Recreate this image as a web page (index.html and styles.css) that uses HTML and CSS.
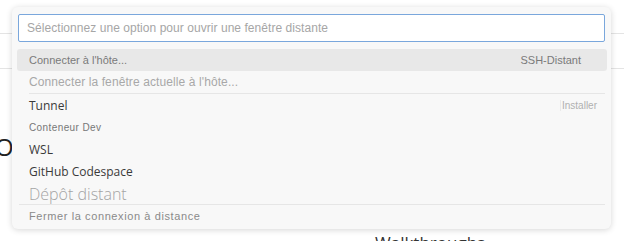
FILE: index.html
```html
<!DOCTYPE html>
<html lang="fr">
<head>
<meta charset="utf-8">
<link rel="stylesheet" href="styles.css">
</head>
<body>
<div class="page">
  <div class="bg-line first"></div>
  <div class="bg-line second"></div>
  <div class="bg-o">O</div>
  <div class="bg-walk">Walkthroughs</div>
</div>
<div class="picker">
  <div class="input">Sélectionnez une option pour ouvrir une fenêtre distante</div>
  <div class="list">
    <div class="row active"><span class="label arial">Connecter à l'hôte...</span><span class="tag">SSH-Distant</span></div>
    <div class="row"><span class="label arial wide faint">Connecter la fenêtre actuelle à l'hôte...</span></div>
    <div class="sep"></div>
    <div class="row"><span class="label segoe">Tunnel</span><span class="install">Installer</span></div>
    <div class="row"><span class="label arial small">Conteneur Dev</span></div>
    <div class="row"><span class="label segoe">WSL</span></div>
    <div class="row"><span class="label segoe">GitHub Codespace</span></div>
    <div class="row"><span class="label light">Dépôt distant</span></div>
    <div class="sep sep-full"></div>
    <div class="row last"><span class="label arial mid">Fermer la connexion à distance</span></div>
  </div>
</div>
</body>
</html>
```

FILE: styles.css
```css
html, body {
  margin: 0;
  padding: 0;
  background: #ffffff;
  width: 624px;
  height: 241px;
  overflow: hidden;
  font-family: "Liberation Sans", Arial, sans-serif;
}
.page {
  position: relative;
  display: flow-root;
  width: 624px;
  height: 241px;
}
.bg-line {
  height: 0;
  border-top: 1px solid #e4e4e4;
}
.bg-line.first { margin-top: 33px; }
.bg-line.second { margin-top: 34px; }
.bg-o {
  position: absolute;
  left: -5px;
  top: 132px;
  font-family: "Open Sans", sans-serif;
  font-size: 24px;
  line-height: 30px;
  color: #222;
}
.bg-walk {
  position: absolute;
  left: 375px;
  top: 232px;
  font-family: "Open Sans", sans-serif;
  font-size: 17px;
  line-height: 22px;
  color: #333;
}
.picker {
  position: absolute;
  left: 12px;
  top: 7px;
  width: 599px;
  height: 222px;
  box-sizing: border-box;
  background: #f8f8f8;
  border-radius: 6px;
  box-shadow: 0 1px 6px rgba(0,0,0,0.16);
  padding: 7px 6px 0 6px;
}
.input {
  height: 28px;
  box-sizing: border-box;
  background: #fff;
  border: 1px solid #7aa7dc;
  border-radius: 2px;
  padding: 0 8px;
  line-height: 26px;
  font-size: 12px;
  letter-spacing: 0.05px;
  color: #a6a6a6;
  white-space: nowrap;
}
.list {
  margin-top: 7px;
  margin-left: -1px;
  margin-right: -2px;
}
.row {
  height: 22px;
  display: flex;
  align-items: center;
  justify-content: space-between;
  padding: 0 26px 0 12px;
  white-space: nowrap;
}
.row.active {
  background: #e8e8e8;
  border-radius: 3px;
}
.label { color: #444; }
.arial {
  font-family: "Liberation Sans", Arial, sans-serif;
  font-size: 11px;
  color: #7a7a7a;
}
.arial.wide { font-size: 12px; letter-spacing: 0.1px; }
.arial.faint { color: #a8a8a8; }
.arial.small { font-size: 10px; color: #777; letter-spacing: 0.4px; }
.arial.mid { font-size: 11px; color: #8a8a8a; letter-spacing: 0.6px; }
.segoe {
  font-family: "Open Sans", sans-serif;
  font-size: 12px;
  color: #3a3a3a;
}
.light {
  font-family: "Open Sans", sans-serif;
  font-weight: 300;
  font-size: 16px;
  color: #a4a4a4;
  position: relative;
  top: 1px;
}
.tag {
  font-family: "Liberation Sans", Arial, sans-serif;
  font-size: 11px;
  color: #7a7a7a;
}
.install {
  font-family: "Liberation Sans", Arial, sans-serif;
  font-size: 10px;
  color: #b0b0b0;
  margin-right: -16px;
  padding-left: 1px;
  border-left: 1px solid #eaeaea;
}
.sep {
  height: 0;
  border-top: 1px solid #e6e6e6;
  margin: 0 2px 0 12px;
}
.sep.sep-full { margin-left: 2px; }
```
